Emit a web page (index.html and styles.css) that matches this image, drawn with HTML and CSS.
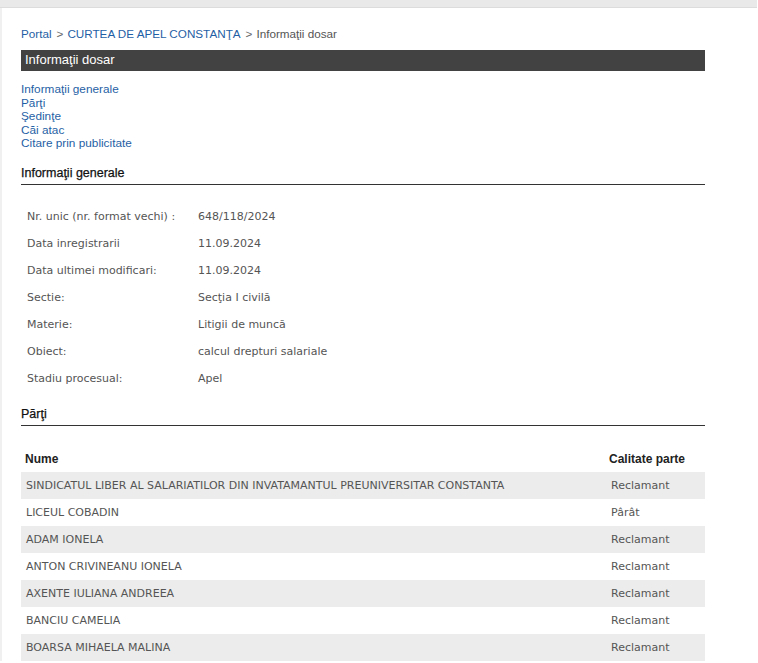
FILE: index.html
```html
<!DOCTYPE html>
<html lang="ro">
<head>
<meta charset="utf-8">
<title>Informaţii dosar</title>
<link rel="stylesheet" href="styles.css">
</head>
<body>
<div class="topbar"></div>
<div class="page">
  <div class="crumbs">
    <a href="#">Portal</a><span class="sep">&gt;</span><a href="#">CURTEA DE APEL CONSTANŢA</a><span class="sep">&gt;</span><span class="cur">Informaţii dosar</span>
  </div>
  <div class="titlebar">Informaţii dosar</div>
  <ul class="toc">
    <li><a href="#">Informaţii generale</a></li>
    <li><a href="#">Părţi</a></li>
    <li><a href="#">Şedinţe</a></li>
    <li><a href="#">Căi atac</a></li>
    <li><a href="#">Citare prin publicitate</a></li>
  </ul>
  <h2 class="section">Informaţii generale</h2>
  <div class="info">
    <div class="row"><span class="lbl">Nr. unic (nr. format vechi) :</span><span class="val">648/118/2024</span></div>
    <div class="row"><span class="lbl">Data inregistrarii</span><span class="val">11.09.2024</span></div>
    <div class="row"><span class="lbl">Data ultimei modificari:</span><span class="val">11.09.2024</span></div>
    <div class="row"><span class="lbl">Sectie:</span><span class="val">Secţia I civilă</span></div>
    <div class="row"><span class="lbl">Materie:</span><span class="val">Litigii de muncă</span></div>
    <div class="row"><span class="lbl">Obiect:</span><span class="val">calcul drepturi salariale</span></div>
    <div class="row"><span class="lbl">Stadiu procesual:</span><span class="val">Apel</span></div>
  </div>
  <h2 class="section parti">Părţi</h2>
  <table class="parties">
    <thead>
      <tr><th class="name">Nume</th><th class="role">Calitate parte</th></tr>
    </thead>
    <tbody>
      <tr><td class="name">SINDICATUL LIBER AL SALARIATILOR DIN INVATAMANTUL PREUNIVERSITAR CONSTANTA</td><td class="role">Reclamant</td></tr>
      <tr><td class="name">LICEUL COBADIN</td><td class="role">Pârât</td></tr>
      <tr><td class="name">ADAM IONELA</td><td class="role">Reclamant</td></tr>
      <tr><td class="name">ANTON CRIVINEANU IONELA</td><td class="role">Reclamant</td></tr>
      <tr><td class="name">AXENTE IULIANA ANDREEA</td><td class="role">Reclamant</td></tr>
      <tr><td class="name">BANCIU CAMELIA</td><td class="role">Reclamant</td></tr>
      <tr><td class="name">BOARSA MIHAELA MALINA</td><td class="role">Reclamant</td></tr>
    </tbody>
  </table>
</div>
</body>
</html>
```

FILE: styles.css
```css
html, body {
  margin: 0;
  padding: 0;
  background: #fff;
}
body {
  font-family: "Liberation Sans", Arial, sans-serif;
  font-size: 12px;
  color: #333;
}
.topbar {
  height: 7px;
  width: 757px;
  background: #e9e9e9;
  border-bottom: 1px solid #dcdcdc;
}
.page {
  width: 684px;
  padding: 19px 0 0 19px;
  border-left: 2px solid #f0f0f0;
  box-sizing: content-box;
}
a {
  color: #1f5fa5;
  text-decoration: none;
}
.crumbs {
  font-size: 11.7px;
  line-height: 14px;
  color: #555;
}
.crumbs .sep {
  margin: 0 4px 0 5px;
  color: #666;
}
.crumbs .cur { color: #555; }
.titlebar {
  margin-top: 9px;
  height: 21px;
  line-height: 20px;
  background: #434242;
  color: #fff;
  font-size: 13px;
  padding-left: 4px;
}
.toc {
  list-style: none;
  margin: 12px 0 0;
  padding: 0;
  font-size: 11.8px;
  line-height: 13.5px;
}
.section {
  margin: 15px 0 0;
  padding: 0 0 4px;
  font-size: 12.5px;
  font-weight: normal;
  color: #111;
  border-bottom: 1px solid #333;
  line-height: 14px;
  -webkit-text-stroke: 0.25px #111;
}
.info {
  padding: 18px 0 0 6px;
  font-family: "DejaVu Sans", Verdana, sans-serif;
  font-size: 11px;
  color: #555;
}
.info .row {
  display: flex;
  height: 27px;
  line-height: 27px;
}
.info .lbl { width: 171px; }
.section.parti { margin-top: 15px; }
.parties {
  margin-top: 20px;
  width: 684px;
  border-collapse: collapse;
  font-family: "DejaVu Sans", Verdana, sans-serif;
  font-size: 11px;
  color: #555;
}
.parties th {
  font-family: "Liberation Sans", Arial, sans-serif;
  font-size: 12px;
  font-weight: bold;
  color: #222;
  text-align: left;
  height: 26px;
  padding: 0 0 0 4px;
}
.parties td {
  height: 27px;
  padding: 0 0 0 5px;
}
.parties th.role { width: 96px; }
.parties td.role { padding-left: 6px; }
.parties tbody tr:nth-child(odd) td { background: #ececec; }
```
